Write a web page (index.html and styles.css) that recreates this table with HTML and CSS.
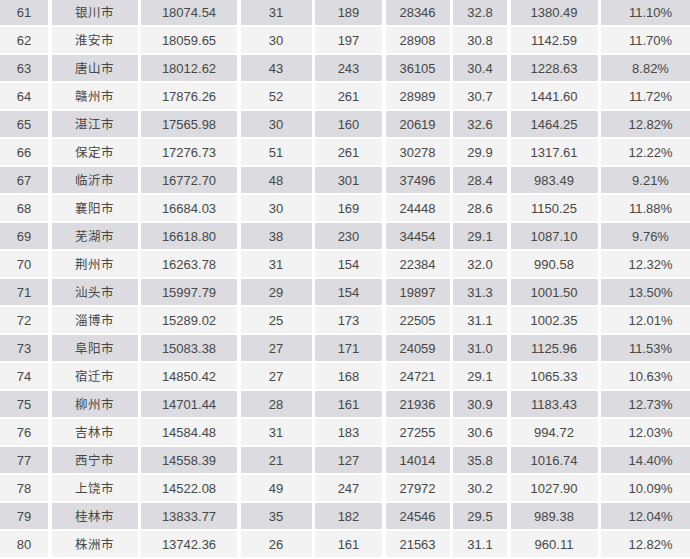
FILE: index.html
```html
<!DOCTYPE html>
<html lang="zh">
<head>
<meta charset="utf-8">
<link rel="stylesheet" href="styles.css">
</head>
<body>
<div class="table">
  <div class="row dark"><span>61</span><span class="city">银川市</span><span>18074.54</span><span>31</span><span>189</span><span>28346</span><span>32.8</span><span>1380.49</span><span>11.10%</span></div>
  <div class="row light"><span>62</span><span class="city">淮安市</span><span>18059.65</span><span>30</span><span>197</span><span>28908</span><span>30.8</span><span>1142.59</span><span>11.70%</span></div>
  <div class="row dark"><span>63</span><span class="city">唐山市</span><span>18012.62</span><span>43</span><span>243</span><span>36105</span><span>30.4</span><span>1228.63</span><span>8.82%</span></div>
  <div class="row light"><span>64</span><span class="city">赣州市</span><span>17876.26</span><span>52</span><span>261</span><span>28989</span><span>30.7</span><span>1441.60</span><span>11.72%</span></div>
  <div class="row dark"><span>65</span><span class="city">湛江市</span><span>17565.98</span><span>30</span><span>160</span><span>20619</span><span>32.6</span><span>1464.25</span><span>12.82%</span></div>
  <div class="row light"><span>66</span><span class="city">保定市</span><span>17276.73</span><span>51</span><span>261</span><span>30278</span><span>29.9</span><span>1317.61</span><span>12.22%</span></div>
  <div class="row dark"><span>67</span><span class="city">临沂市</span><span>16772.70</span><span>48</span><span>301</span><span>37496</span><span>28.4</span><span>983.49</span><span>9.21%</span></div>
  <div class="row light"><span>68</span><span class="city">襄阳市</span><span>16684.03</span><span>30</span><span>169</span><span>24448</span><span>28.6</span><span>1150.25</span><span>11.88%</span></div>
  <div class="row dark"><span>69</span><span class="city">芜湖市</span><span>16618.80</span><span>38</span><span>230</span><span>34454</span><span>29.1</span><span>1087.10</span><span>9.76%</span></div>
  <div class="row light"><span>70</span><span class="city">荆州市</span><span>16263.78</span><span>31</span><span>154</span><span>22384</span><span>32.0</span><span>990.58</span><span>12.32%</span></div>
  <div class="row dark"><span>71</span><span class="city">汕头市</span><span>15997.79</span><span>29</span><span>154</span><span>19897</span><span>31.3</span><span>1001.50</span><span>13.50%</span></div>
  <div class="row light"><span>72</span><span class="city">淄博市</span><span>15289.02</span><span>25</span><span>173</span><span>22505</span><span>31.1</span><span>1002.35</span><span>12.01%</span></div>
  <div class="row dark"><span>73</span><span class="city">阜阳市</span><span>15083.38</span><span>27</span><span>171</span><span>24059</span><span>31.0</span><span>1125.96</span><span>11.53%</span></div>
  <div class="row light"><span>74</span><span class="city">宿迁市</span><span>14850.42</span><span>27</span><span>168</span><span>24721</span><span>29.1</span><span>1065.33</span><span>10.63%</span></div>
  <div class="row dark"><span>75</span><span class="city">柳州市</span><span>14701.44</span><span>28</span><span>161</span><span>21936</span><span>30.9</span><span>1183.43</span><span>12.73%</span></div>
  <div class="row light"><span>76</span><span class="city">吉林市</span><span>14584.48</span><span>31</span><span>183</span><span>27255</span><span>30.6</span><span>994.72</span><span>12.03%</span></div>
  <div class="row dark"><span>77</span><span class="city">西宁市</span><span>14558.39</span><span>21</span><span>127</span><span>14014</span><span>35.8</span><span>1016.74</span><span>14.40%</span></div>
  <div class="row light"><span>78</span><span class="city">上饶市</span><span>14522.08</span><span>49</span><span>247</span><span>27972</span><span>30.2</span><span>1027.90</span><span>10.09%</span></div>
  <div class="row dark"><span>79</span><span class="city">桂林市</span><span>13833.77</span><span>35</span><span>182</span><span>24546</span><span>29.5</span><span>989.38</span><span>12.04%</span></div>
  <div class="row light"><span>80</span><span class="city">株洲市</span><span>13742.36</span><span>26</span><span>161</span><span>21563</span><span>31.1</span><span>960.11</span><span>12.82%</span></div>
</div>
</body>
</html>
```

FILE: styles.css
```css
html, body {
  margin: 0;
  padding: 0;
  background: #ffffff;
  overflow: hidden;
}

.table {
  display: flex;
  flex-direction: column;
  gap: 2px;
  margin-top: -1px;
  width: 700px;
  font-family: "Liberation Sans", "Noto Sans CJK SC", sans-serif;
  font-size: 13px;
  color: #474747;
}

.row {
  display: grid;
  grid-template-columns: 48px 86px 96px 71px 67px 64px 54px 87px 99px;
  column-gap: 3.5px;
  height: 26px;
}

.row span {
  display: flex;
  align-items: center;
  justify-content: center;
  line-height: 1;
}

.row.dark span {
  background: #dcdce0;
}

.row.light span {
  background: #f3f3f3;
}

.row .city {
  font-family: "Noto Sans CJK SC", sans-serif;
  font-size: 12.5px;
  letter-spacing: 0.5px;
}
```
